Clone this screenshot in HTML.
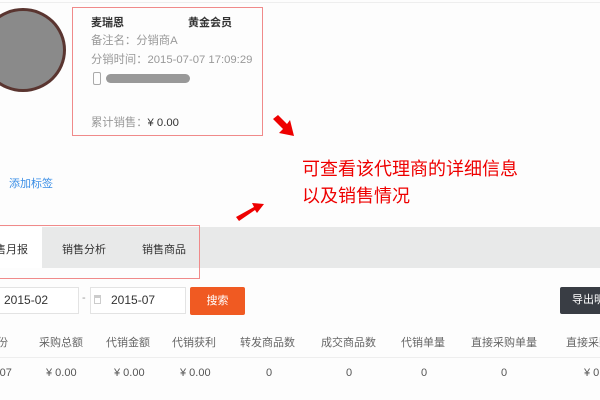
<!DOCTYPE html>
<html><head><meta charset="utf-8"><style>
*{margin:0;padding:0;box-sizing:border-box}
body{width:600px;height:400px;overflow:hidden;background:#fdfdfd;font-family:"Liberation Sans","Noto Sans CJK SC",sans-serif;position:relative;font-size:11px;color:#333}
.a{position:absolute;white-space:nowrap}
.g{color:#999}
</style></head><body>
<div class="a" style="left:0;top:2px;width:600px;height:1px;background:#eee"></div>
<div class="a" style="left:-20px;top:8px;width:86px;height:84px;border-radius:50%;background:#8a8a8a;border:3px solid #5a3530"></div>
<div class="a" style="left:72px;top:7px;width:191px;height:129px;border:1px solid #f08a8a"></div>
<div class="a" style="left:91px;top:14px;font-size:11px;font-weight:bold">麦瑞恩</div>
<div class="a" style="left:188px;top:14px;font-size:11px;font-weight:bold">黄金会员</div>
<div class="a g" style="left:91px;top:32px;font-size:11.3px">备注名：分销商A</div>
<div class="a g" style="left:91px;top:51px;font-size:11.3px">分销时间：2015-07-07 17:09:29</div>
<div class="a" style="left:93px;top:72px;width:8px;height:13px;border:1.5px solid #aaa;border-radius:2px"></div>
<div class="a" style="left:106px;top:74px;width:84px;height:9px;border-radius:5px;background:#999"></div>
<div class="a g" style="left:91px;top:114px;font-size:11.3px">累计销售：<span style="color:#333">¥ 0.00</span></div>
<div class="a" style="left:9px;top:175px;color:#3a8ee6">添加标签</div>
<svg class="a" style="left:270px;top:114px" width="28" height="24" viewBox="0 0 28 24"><path d="M3 5 L8 1 L17 10 L20 6 L24 22 L9 19 L13 15 Z" fill="#e00"/></svg>
<svg class="a" style="left:234px;top:201px" width="30" height="22" viewBox="0 0 30 22"><path d="M2 16 L20 6 L18 2 L30 3 L23 12 L21 9 L5 20 Z" fill="#e00"/></svg>
<div class="a" style="left:302px;top:155px;font-size:18px;color:#e00">可查看该代理商的详细信息</div>
<div class="a" style="left:302px;top:182px;font-size:18px;color:#e00">以及销售情况</div>
<div class="a" style="left:0;top:227px;width:600px;height:41px;background:#e8e9e9"></div>
<div class="a" style="left:0;top:227px;width:42px;height:41px;background:#fff"></div>
<div class="a" style="left:-5px;top:241px;font-size:11px">售月报</div>
<div class="a" style="left:62px;top:241px;font-size:11px">销售分析</div>
<div class="a" style="left:142px;top:241px;font-size:11px">销售商品</div>
<div class="a" style="left:0;top:225px;width:200px;height:54px;border:1px solid #f08a8a;border-left:none"></div>
<div class="a" style="left:-2px;top:287px;width:81px;height:27px;border:1px solid #e3e3e3;background:#fff"></div>
<div class="a" style="left:4px;top:293px;font-size:12px">2015-02</div>
<div class="a g" style="left:82px;top:292px">-</div>
<div class="a" style="left:90px;top:287px;width:96px;height:27px;border:1px solid #e3e3e3;background:#fff"></div>
<div class="a" style="left:94px;top:295px;width:7px;height:9px;border:1px solid #ccc;border-top-width:3px"></div>
<div class="a" style="left:111px;top:293px;font-size:12px">2015-07</div>
<div class="a" style="left:190px;top:287px;width:55px;height:28px;background:#f05a22;border-radius:2px;color:#fff;text-align:center;line-height:28px">搜索</div>
<div class="a" style="left:560px;top:287px;width:50px;height:27px;background:#393d44;border-radius:2px;color:#fff;line-height:27px;padding-left:12px">导出明</div>
<div class="a" style="left:0;top:357px;width:600px;height:1px;background:#eee"></div>
<div class="a" style="left:-3px;top:334px;color:#666">份</div>
<div class="a" style="left:39px;top:334px;color:#666">采购总额</div>
<div class="a" style="left:106px;top:334px;color:#666">代销金额</div>
<div class="a" style="left:172px;top:334px;color:#666">代销获利</div>
<div class="a" style="left:240px;top:334px;color:#666">转发商品数</div>
<div class="a" style="left:321px;top:334px;color:#666">成交商品数</div>
<div class="a" style="left:401px;top:334px;color:#666">代销单量</div>
<div class="a" style="left:471px;top:334px;color:#666">直接采购单量</div>
<div class="a" style="left:566px;top:334px;color:#666">直接采购</div>
<div class="a" style="left:-4px;top:367px;color:#555">-07</div>
<div class="a" style="left:46px;top:367px;color:#555">¥ 0.00</div>
<div class="a" style="left:114px;top:367px;color:#555">¥ 0.00</div>
<div class="a" style="left:180px;top:367px;color:#555">¥ 0.00</div>
<div class="a" style="left:266px;top:367px;color:#555">0</div>
<div class="a" style="left:346px;top:367px;color:#555">0</div>
<div class="a" style="left:421px;top:367px;color:#555">0</div>
<div class="a" style="left:501px;top:367px;color:#555">0</div>
<div class="a" style="left:584px;top:367px;color:#555">¥ 0.</div>
</body></html>
